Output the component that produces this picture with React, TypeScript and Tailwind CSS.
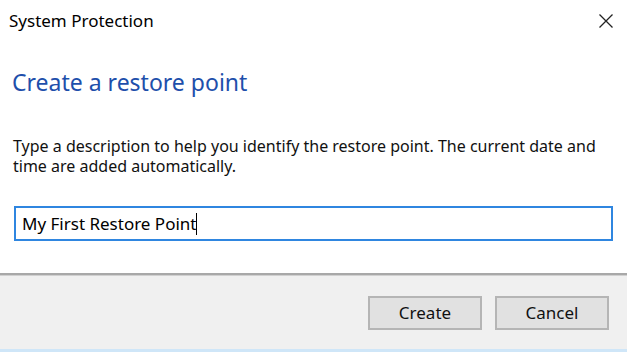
import React from "react";

export default function App() {
  return (
    <div className="w-[627px] h-[352px] bg-white flex flex-col overflow-hidden" style={{ fontFamily: '"Noto Sans", "Open Sans", sans-serif' }}>
      <div className="h-[42px] flex items-center justify-between pl-[9px] pr-[13px]">
        <span className="text-[17px] text-black">System Protection</span>
        <svg width="16" height="16" viewBox="0 0 16 16" className="text-[#222]">
          <path d="M1.5 1.5 L14.5 14.5 M14.5 1.5 L1.5 14.5" stroke="currentColor" strokeWidth="1.3" fill="none" />
        </svg>
      </div>
      <div className="pl-[12px] mt-[26px] h-[28px] flex items-center">
        <span className="text-[23px] text-[#1e4fab]">Create a restore point</span>
      </div>
      <div className="pl-[13px] pr-[10px] mt-[40px] text-[16px] leading-[20px] text-[#111]">
        Type a description to help you identify the restore point. The current date and time are added automatically.
      </div>
      <div className="mx-[14px] mt-[30px] h-[35px] border-2 border-[#2f86e0] flex items-center pl-[6px]">
        <span className="text-[17px] text-black">My First Restore Point</span>
        <span className="w-px h-[22px] bg-black"></span>
      </div>
      <div className="mt-[32px] h-[3px] bg-[#a8a8a8] border-b border-[#d0d0d0]"></div>
      <div className="flex-1 bg-[#f0f0f0] flex items-start justify-end pr-[18px] pt-[20px] gap-[13px]">
        <button className="w-[114px] h-[34px] bg-[#e1e1e1] border-2 border-[#b5b5b5] text-[17px] text-[#111]">Create</button>
        <button className="w-[114px] h-[34px] bg-[#e1e1e1] border-2 border-[#b5b5b5] text-[17px] text-[#111]">Cancel</button>
      </div>
      <div className="h-[3px] bg-[#cfe6f8]"></div>
    </div>
  );
}
